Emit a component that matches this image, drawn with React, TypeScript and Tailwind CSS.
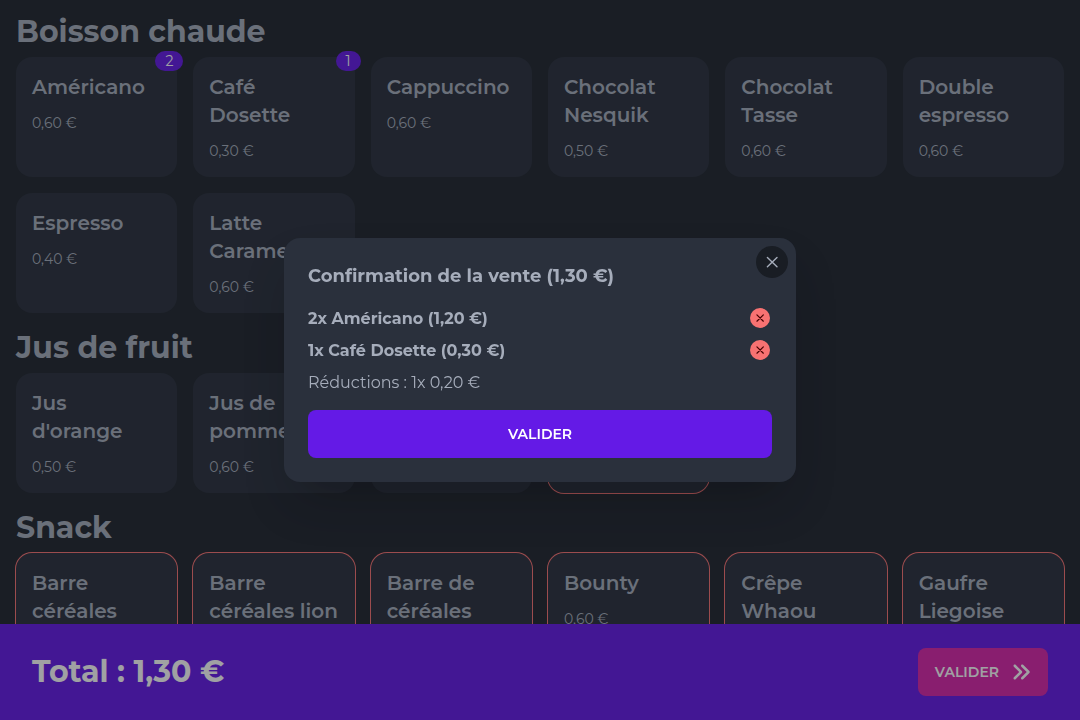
import { FaAnglesRight } from "react-icons/fa6";

type Product = {
  name: string;
  price: string;
  count?: number;
  outOfStock?: boolean;
};

type Category = {
  title: string;
  products: Product[];
};

const categories: Category[] = [
  {
    title: "Boisson chaude",
    products: [
      { name: "Américano", price: "0,60 €", count: 2 },
      { name: "Café Dosette", price: "0,30 €", count: 1 },
      { name: "Cappuccino", price: "0,60 €" },
      { name: "Chocolat Nesquik", price: "0,50 €" },
      { name: "Chocolat Tasse", price: "0,60 €" },
      { name: "Double espresso", price: "0,60 €" },
      { name: "Espresso", price: "0,40 €" },
      { name: "Latte Caramel", price: "0,60 €" },
    ],
  },
  {
    title: "Jus de fruit",
    products: [
      { name: "Jus d'orange", price: "0,50 €" },
      { name: "Jus de pomme", price: "0,60 €" },
      { name: "Jus de raisin", price: "0,60 €" },
      { name: "Jus tropical", price: "0,60 €", outOfStock: true },
    ],
  },
  {
    title: "Snack",
    products: [
      { name: "Barre céréales", price: "0,50 €", outOfStock: true },
      { name: "Barre céréales lion", price: "0,50 €", outOfStock: true },
      { name: "Barre de céréales", price: "0,50 €", outOfStock: true },
      { name: "Bounty", price: "0,60 €", outOfStock: true },
      { name: "Crêpe Whaou", price: "0,50 €", outOfStock: true },
      { name: "Gaufre Liegoise", price: "0,60 €", outOfStock: true },
    ],
  },
];

const cart = [
  { name: "Américano", quantity: 2, total: "1,20 €" },
  { name: "Café Dosette", quantity: 1, total: "0,30 €" },
];

function CrossIcon({ className }: { className: string }) {
  return (
    <svg
      viewBox="0 0 12 12"
      className={className}
      fill="none"
      stroke="currentColor"
      strokeLinecap="round"
      aria-hidden="true"
    >
      <path d="M1.4 1.4 11 10.8M11 1.4 1.4 10.8" />
    </svg>
  );
}

function ProductCard({ product }: { product: Product }) {
  return (
    <button
      type="button"
      className={
        "relative flex min-h-30 flex-col items-start gap-3 rounded-2xl bg-[#2a303c] p-4 text-left" +
        (product.outOfStock ? " ring-1 ring-[#f87272]" : "")
      }
    >
      {product.count !== undefined && (
        <span className="absolute -top-1.5 -right-1.5 flex h-5 items-center rounded-[10px] bg-[#641ae6] px-2.5 text-sm text-white">
          {product.count}
        </span>
      )}
      <span className="text-xl font-semibold">{product.name}</span>
      <span className="text-sm">{product.price}</span>
    </button>
  );
}

function CategorySection({ category }: { category: Category }) {
  return (
    <section className="flex flex-col gap-1.5">
      <h2 className="text-3xl/[38px] font-bold">{category.title}</h2>
      <div className="grid grid-cols-6 gap-4">
        {category.products.map((product) => (
          <ProductCard key={product.name} product={product} />
        ))}
      </div>
    </section>
  );
}

function TotalBar() {
  return (
    <footer className="flex shrink-0 items-center justify-between bg-[#641ae6] px-8 py-6 text-white">
      <p className="text-3xl/[38px] font-bold">Total : 1,30 €</p>
      <button
        type="button"
        className="flex h-12 items-center gap-3 rounded-lg bg-[#d926a9] px-[17px] text-sm font-semibold uppercase"
      >
        Valider
        <FaAnglesRight className="size-5" aria-hidden="true" />
      </button>
    </footer>
  );
}

function ConfirmDialog() {
  return (
    <div className="fixed inset-0 flex items-center justify-center bg-[#111318]/40">
      <div
        role="dialog"
        aria-modal="true"
        aria-labelledby="confirm-title"
        className="relative w-full max-w-lg rounded-2xl bg-[#2a303c] p-6 shadow-2xl"
      >
        <button
          type="button"
          aria-label="Fermer"
          className="absolute top-2 right-2 flex size-8 items-center justify-center rounded-full bg-[#191d24]"
        >
          <CrossIcon className="size-3 stroke-[1.4]" />
        </button>
        <h3 id="confirm-title" className="text-lg font-bold">
          Confirmation de la vente (1,30 €)
        </h3>
        <ul className="mt-3">
          {cart.map((item) => (
            <li key={item.name} className="flex h-8 items-center justify-between font-bold">
              <span className="pt-0.5">
                {item.quantity}x {item.name} ({item.total})
              </span>
              <button
                type="button"
                aria-label={"Retirer " + item.name}
                className="mr-0.5 flex size-5 items-center justify-center rounded-full bg-[#f87272] text-[#470000]"
              >
                <CrossIcon className="size-2 stroke-[1.8]" />
              </button>
            </li>
          ))}
        </ul>
        <p className="flex h-8 items-center pt-0.5">Réductions : 1x 0,20 €</p>
        <button
          type="button"
          className="mt-3 h-12 w-full rounded-lg bg-[#641ae6] text-sm font-semibold text-white uppercase"
        >
          Valider
        </button>
      </div>
    </div>
  );
}

export default function App() {
  return (
    <div className="flex h-screen flex-col overflow-hidden bg-[#20252e] font-[Montserrat,'Open_Sans',sans-serif] text-[#a6adbb]">
      <main className="flex min-h-0 flex-1 flex-col gap-4 overflow-hidden px-4 pt-[13px]">
        {categories.map((category) => (
          <CategorySection key={category.title} category={category} />
        ))}
      </main>
      <TotalBar />
      <ConfirmDialog />
    </div>
  );
}
